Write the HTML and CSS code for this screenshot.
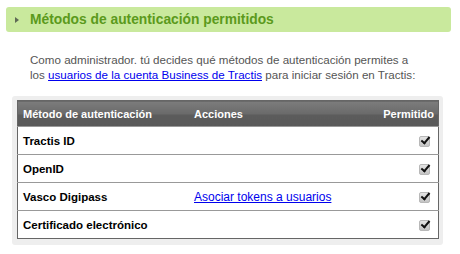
FILE: index.html
```html
<!DOCTYPE html>
<html lang="es">
<head>
  <meta charset="UTF-8">
  <title>Métodos de autenticación</title>
  <link rel="stylesheet" href="styles.css">
</head>
<body>
  <div class="section">
    <h2 class="section-title"><span class="arrow"></span>Métodos de autenticación permitidos</h2>

    <p class="intro">
      Como administrador. tú decides qué métodos de autenticación permites a<br>
      los <a href="#">usuarios de la cuenta Business de Tractis</a> para iniciar sesión en Tractis:
    </p>

    <div class="table-box">
      <table class="methods">
        <thead>
          <tr>
            <th class="col-name">Método de autenticación</th>
            <th class="col-actions">Acciones</th>
            <th class="col-allowed">Permitido</th>
          </tr>
        </thead>
        <tbody>
          <tr>
            <td class="col-name">Tractis ID</td>
            <td class="col-actions"></td>
            <td class="col-allowed"><span class="check"></span></td>
          </tr>
          <tr>
            <td class="col-name">OpenID</td>
            <td class="col-actions"></td>
            <td class="col-allowed"><span class="check"></span></td>
          </tr>
          <tr>
            <td class="col-name">Vasco Digipass</td>
            <td class="col-actions"><a href="#">Asociar tokens a usuarios</a></td>
            <td class="col-allowed"><span class="check"></span></td>
          </tr>
          <tr>
            <td class="col-name">Certificado electrónico</td>
            <td class="col-actions"></td>
            <td class="col-allowed"><span class="check"></span></td>
          </tr>
        </tbody>
      </table>
    </div>
  </div>
</body>
</html>
```

FILE: styles.css
```css
body {
  margin: 0;
  font-family: "Liberation Sans", Arial, sans-serif;
  background-color: #ffffff;
}

.section {
  padding: 7px 9px 0 6px;
}

.section-title {
  display: flex;
  align-items: center;
  margin: 0;
  height: 25px;
  padding-left: 9px;
  background-color: #c9e99d;
  border-radius: 3px;
  color: #5b9a1c;
  font-size: 13.8px;
  font-weight: bold;
}

.arrow {
  width: 0;
  height: 0;
  margin-right: 11px;
  border-top: 3.5px solid transparent;
  border-bottom: 3.5px solid transparent;
  border-left: 4px solid #5f6a55;
}

.intro {
  margin: 20px 0 0 24px;
  font-size: 11.6px;
  line-height: 15px;
  color: #555555;
}

a {
  color: #0000ee;
}

.table-box {
  margin: 14px 8px 0 6px;
  padding: 4px 4px 6px 5px;
  background-color: #eeeeee;
  border-radius: 3px;
}

.methods {
  width: 100%;
  border-collapse: collapse;
  background-color: #ffffff;
  border: 1px solid #666666;
  font-size: 11.5px;
}

.methods th {
  height: 25px;
  padding: 0 5px;
  text-align: left;
  color: #ffffff;
  font-size: 11px;
  background: linear-gradient(#7c7c7c, #6a6a6a 50%, #5c5c5c 51%, #595959);
}

.methods td {
  height: 27px;
  padding: 0 5px;
  border-top: 1px solid #999999;
  color: #000000;
}

.methods td.col-name {
  font-weight: bold;
}

.col-name {
  width: 161px;
}

.col-actions {
  font-size: 12px;
}

.methods th.col-allowed {
  text-align: right;
  padding-right: 4px;
}

.methods td.col-allowed {
  text-align: right;
  padding-right: 8px;
}

.check {
  display: inline-block;
  position: relative;
  width: 9px;
  height: 9px;
  vertical-align: middle;
  border: 1px solid #b8b8b8;
  border-radius: 2px;
  background: linear-gradient(#e4e4e4, #c4c4c4);
}

.check::after {
  content: "";
  position: absolute;
  left: 3px;
  top: -2px;
  width: 3px;
  height: 7px;
  border-right: 2px solid #111111;
  border-bottom: 2px solid #111111;
  transform: rotate(40deg);
}
```
